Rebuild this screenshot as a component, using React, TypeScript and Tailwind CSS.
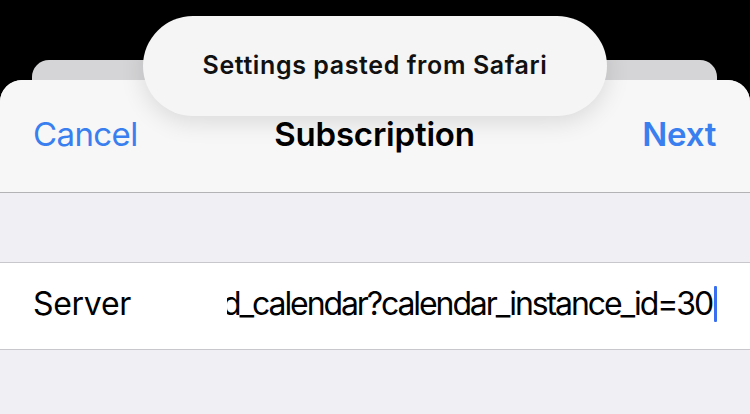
const url = 'https://calendar.example.com/ical/download_calendar?calendar_instance_id=30';

export default function App() {
  return (
    <div
      className="relative w-[750px] h-[414px] overflow-hidden bg-black flex flex-col"
      style={{ fontFamily: 'Inter, "Noto Sans", sans-serif' }}
    >
      {/* stacked sheet behind */}
      <div className="mt-[60px] mx-[32px] w-[685px] h-[20px] rounded-t-[17px] bg-[#d5d5d7]" />

      {/* main sheet */}
      <div className="flex-1 flex flex-col rounded-t-[22px] bg-[#efeff4] overflow-hidden">
        <header className="h-[113px] flex-shrink-0 bg-[#f7f7f7] border-b border-[#b3b3b6] grid grid-cols-[1fr_auto_1fr] items-center pl-[33px] pr-[34px] pb-[2px]">
          <button className="justify-self-start text-[33px] text-[#3a7ff0] tracking-[-0.6px]">Cancel</button>
          <h1 className="text-[33px] font-semibold text-black tracking-[-0.2px]">Subscription</h1>
          <button className="justify-self-end text-[33px] font-semibold text-[#3a7ff0] tracking-[-0.3px]">Next</button>
        </header>

        <div className="h-[69px] flex-shrink-0" />

        <div className="h-[88px] flex-shrink-0 bg-white border-y border-[#c8c8cc] flex items-center pl-[33px] pr-[33px] pb-[4px]">
          <span className="w-[194px] flex-shrink-0 text-[32px] text-black tracking-[-0.3px]">Server</span>
          <div className="flex-1 flex items-center justify-end overflow-hidden">
            <span className="flex-shrink-0 whitespace-nowrap text-[32px] text-black tracking-[-2.1px]">{url}</span>
            <span className="flex-shrink-0 w-[3px] h-[36px] ml-[2px] rounded-[1px] bg-[#3a6ff0]" />
          </div>
        </div>
      </div>

      {/* toast */}
      <div className="absolute left-[143px] top-[16px] w-[464px] h-[100px] rounded-full bg-[#f5f5f5] shadow-[0_6px_24px_rgba(0,0,0,0.12)] flex items-center justify-center">
        <span className="text-[25px] font-semibold text-[#111] tracking-[0.6px]">Settings pasted from Safari</span>
      </div>
    </div>
  );
}
